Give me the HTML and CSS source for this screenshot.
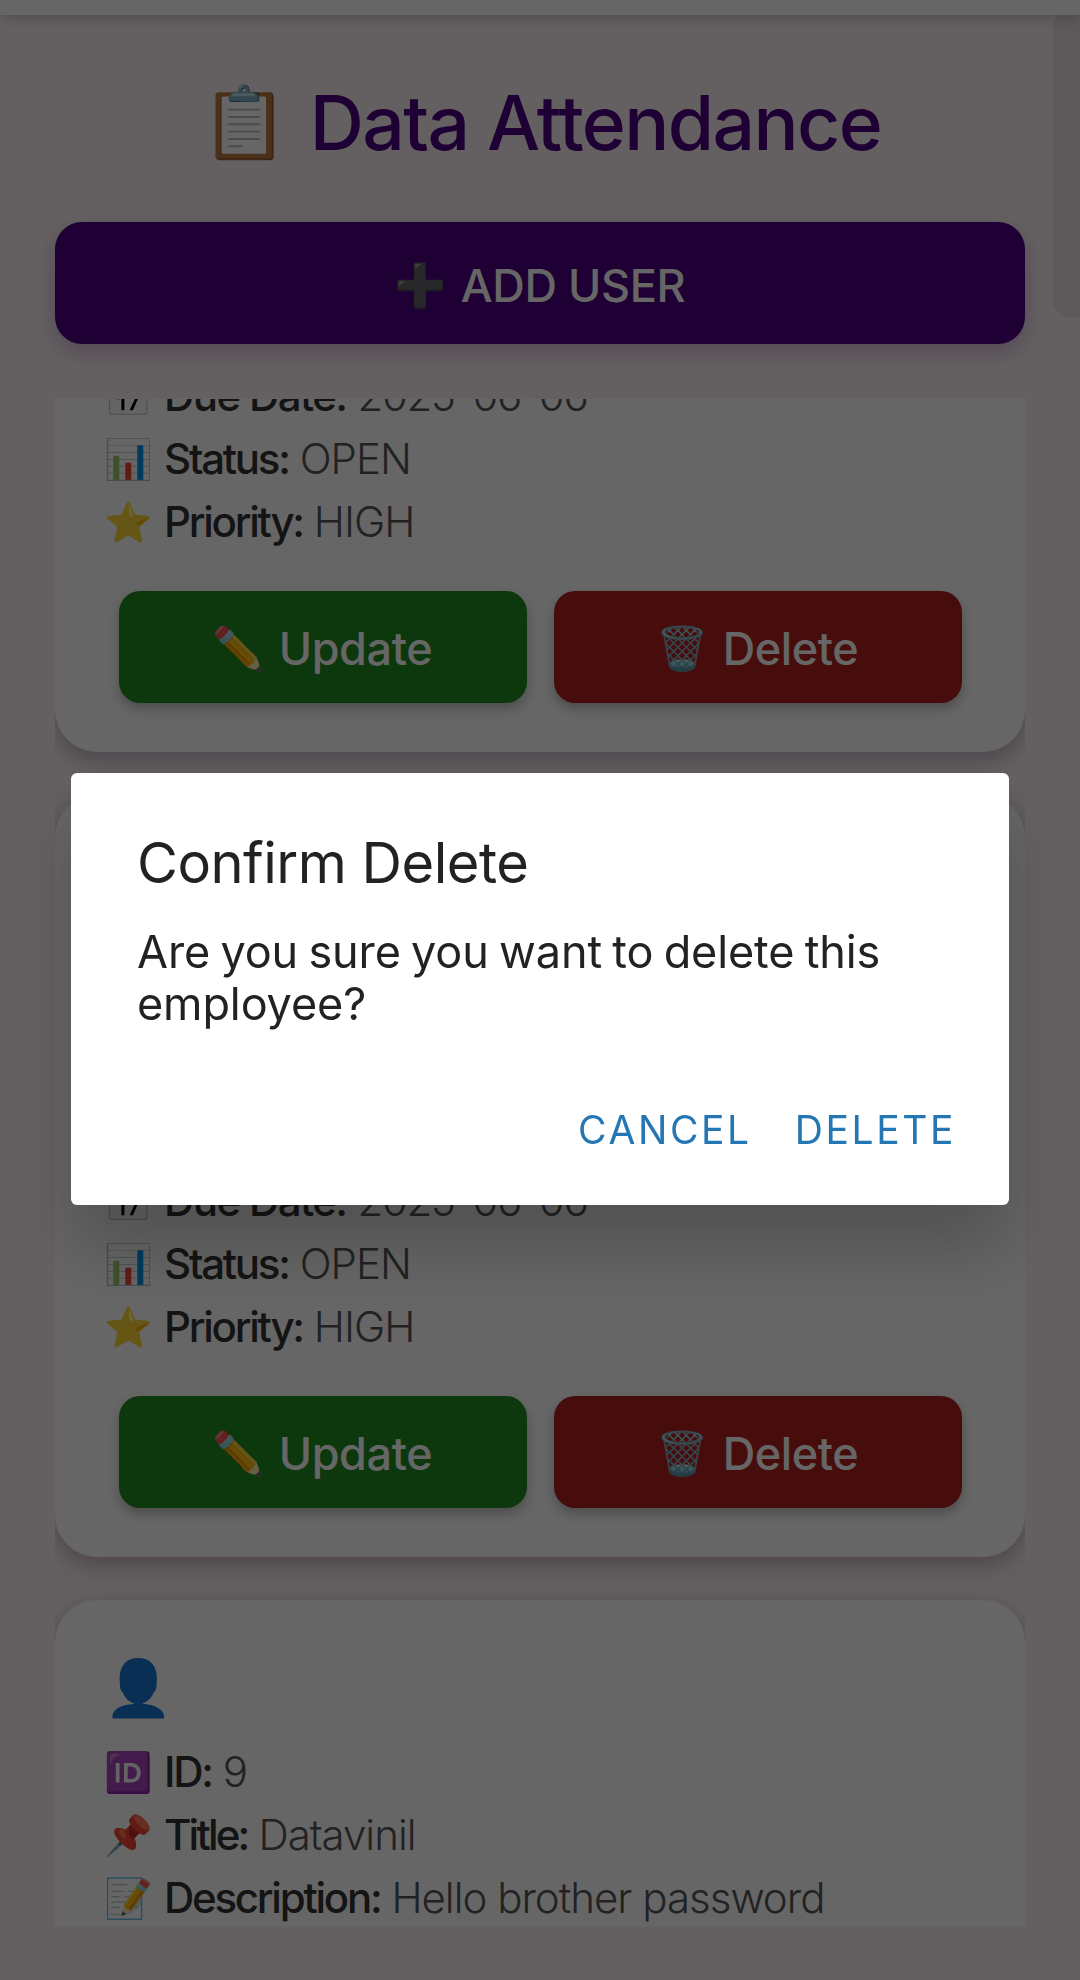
FILE: index.html
```
<!DOCTYPE html>
<html lang="en">
<head>
<meta charset="utf-8">
<title>Data Attendance</title>
<link rel="stylesheet" href="styles.css">
</head>
<body>
<div class="app">
  <header class="app-bar"></header>
  <main class="screen">
    <h1 class="title"><span class="emoji">📋</span><span>Data Attendance</span></h1>
    <button class="btn btn-add"><span class="emoji">➕</span><span>ADD USER</span></button>
    <section class="list">
      <article class="card card-scrolled">
        <p class="row"><span class="emoji">📅</span><b class="wide">Due Date:</b> <span class="date">2025-06-06</span></p>
        <p class="row"><span class="emoji">📊</span><b>Status:</b> <span>OPEN</span></p>
        <p class="row"><span class="emoji">⭐</span><b>Priority:</b> <span>HIGH</span></p>
        <div class="actions">
          <button class="btn btn-update"><span class="emoji">✏️</span><span>Update</span></button>
          <button class="btn btn-delete"><span class="emoji">🗑️</span><span>Delete</span></button>
        </div>
      </article>
      <article class="card card-full">
        <p class="row"><span class="emoji">📅</span><b class="wide">Due Date:</b> <span class="date">2025-06-06</span></p>
        <p class="row"><span class="emoji">📊</span><b>Status:</b> <span>OPEN</span></p>
        <p class="row"><span class="emoji">⭐</span><b>Priority:</b> <span>HIGH</span></p>
        <div class="actions">
          <button class="btn btn-update"><span class="emoji">✏️</span><span>Update</span></button>
          <button class="btn btn-delete"><span class="emoji">🗑️</span><span>Delete</span></button>
        </div>
      </article>
      <article class="card card-next">
        <div class="avatar emoji">👤</div>
        <p class="row"><span class="emoji">🆔</span><b>ID:</b> <span>9</span></p>
        <p class="row"><span class="emoji">📌</span><b class="tight">Title:</b> <span>Datavinil</span></p>
        <p class="row"><span class="emoji">📝</span><b>Description:</b> <span>Hello brother password</span></p>
      </article>
    </section>
  </main>
  <div class="scroll-thumb"></div>
</div>
<div class="scrim">
  <div class="dialog" role="dialog">
    <h2>Confirm Delete</h2>
    <p>Are you sure you want to delete this<br>employee?</p>
    <div class="dialog-actions"><button>CANCEL</button><button>DELETE</button></div>
  </div>
</div>
</body>
</html>
```
FILE: styles.css
```
* { box-sizing: border-box; margin: 0; padding: 0; }
body { font-family: Inter, Roboto, sans-serif; background: #fbf0f2; }
button { font: inherit; letter-spacing: inherit; border: 0; background: none; color: inherit; }
.app { position: relative; isolation: isolate; height: 1980px; overflow: hidden; display: flex; flex-direction: column; }
.app-bar { height: 15px; flex: none; background: #fff; box-shadow: 0 2px 14px rgba(60, 40, 80, .3); z-index: 1; }
.screen { flex: 1; min-height: 0; display: flex; flex-direction: column; padding: 61px 55px 53px; }
.emoji { font-family: "Noto Color Emoji", Inter, sans-serif; font-weight: 400; letter-spacing: 0; text-align: center; flex: none; }

.title { display: flex; justify-content: center; align-items: center; gap: 21px; height: 92px; padding: 1px 0 0 3px; font-size: 75px; font-weight: 500; line-height: 92px; letter-spacing: -1.6px; color: #4b0082; }
.title .emoji { font-size: 70px; width: 87px; }

.btn { display: flex; justify-content: center; align-items: center; gap: 14px; padding-top: 4px; font-size: 45px; font-weight: 500; line-height: 56px; letter-spacing: -.4px; color: #fff; }
.btn .emoji { font-size: 42px; width: 52px; }
.btn.btn-add { flex: none; height: 122px; margin-top: 54px; padding-top: 6px; border-radius: 27px; background: #4b0082; box-shadow: 0 8px 22px rgba(75, 0, 130, .25); }

.list { flex: 1; min-height: 0; margin-top: 55px; overflow: hidden; display: flex; flex-direction: column; gap: 43px; }
.card { flex: none; display: flex; flex-direction: column; background: #fff; border-radius: 42px; box-shadow: 0 8px 24px rgba(40, 10, 60, .3); }
.card-scrolled { height: 353px; justify-content: flex-end; padding-bottom: 49px; border-radius: 0 0 42px 42px; }
.card-full { height: 762px; justify-content: flex-end; padding-bottom: 49px; }
.card-next { height: 762px; padding-top: 54px; }
.row { flex: none; display: flex; align-items: center; padding-left: 49px; height: 63px; font-size: 42px; line-height: 63px; white-space: pre; }
.row .emoji { font-size: 39px; width: 49px; margin-right: 11px; padding-top: 3px; }
.row b { font-weight: 500; letter-spacing: -2.25px; color: #333; margin-right: 11px; }
.row b.wide { letter-spacing: -1.6px; }
.row b.tight { letter-spacing: -2.8px; }
.row span:last-child { font-weight: 300; letter-spacing: -1px; color: #555; }
.row span.date:last-child { letter-spacing: -1.3px; }
.avatar { width: 69px; height: 69px; margin: 0 0 17px 49px; font-size: 55px; line-height: 69px; }
.actions { flex: none; display: flex; gap: 27px; height: 112px; margin-top: 38px; padding: 0 63.5px; }
.actions .btn { flex: 1; border-radius: 21px; box-shadow: 0 6px 12px rgba(0, 0, 0, .25); }
.btn-update { background: #228b22; }
.btn-delete { background: #b22222; }

.scroll-thumb { position: absolute; top: 11px; right: 0; width: 27px; height: 306px; border-radius: 16px 0 0 16px; background: rgba(100, 105, 135, .12); }

.scrim { position: fixed; inset: 0; display: flex; align-items: center; justify-content: center; padding-bottom: 2px; background: rgba(0, 0, 0, .6); }
.dialog { width: 938px; height: 432px; padding: 57px 53px 0 66px; border-radius: 6px; background: #fff; color: #222; box-shadow: 0 44px 70px rgba(0, 0, 0, .21); }
.dialog h2 { font-size: 56px; font-weight: 400; line-height: 66px; letter-spacing: -.5px; }
.dialog p { margin-top: 30px; font-size: 45px; line-height: 52px; letter-spacing: -.12px; word-spacing: -2.2px; white-space: nowrap; }
.dialog-actions { display: flex; justify-content: flex-end; gap: 43px; margin-top: 76px; font-size: 39px; line-height: 48px; letter-spacing: 2.6px; color: #2477b3; }
```
